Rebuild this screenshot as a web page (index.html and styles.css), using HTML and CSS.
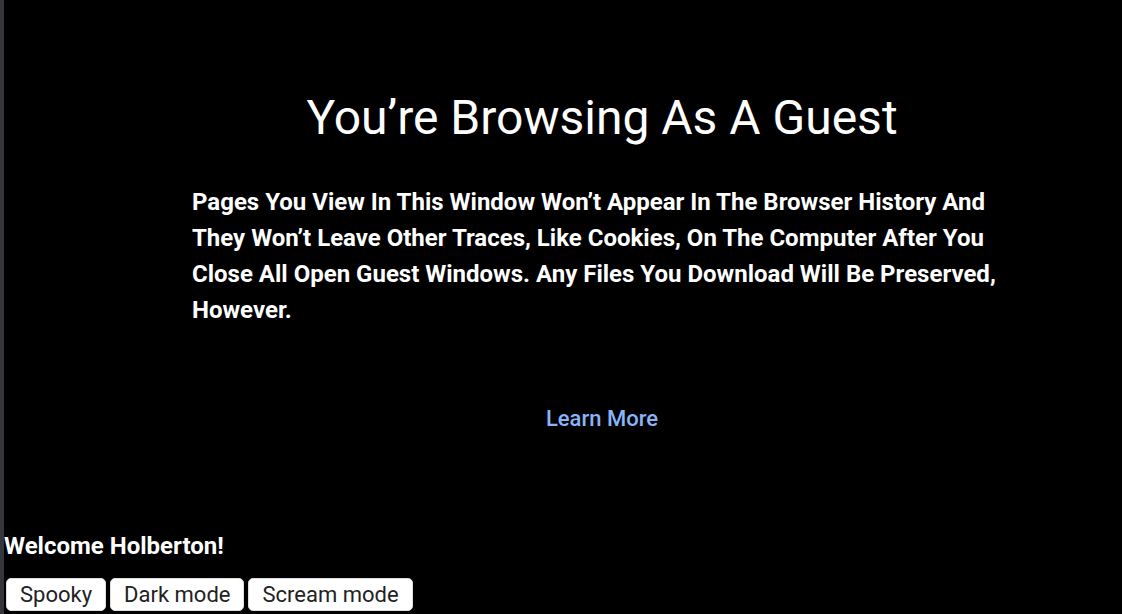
FILE: index.html
```html
<!DOCTYPE html>
<html lang="en">
<head>
<meta charset="utf-8">
<title>Guest</title>
<link rel="stylesheet" href="styles.css">
</head>
<body>
<div class="page">
  <main class="guest">
    <h1 class="title">You’re Browsing As A Guest</h1>
    <p class="desc">Pages You View In This Window Won’t Appear In The Browser History And They Won’t Leave Other Traces, Like Cookies, On The Computer After You Close All Open Guest Windows. Any Files You Download Will Be Preserved, However.</p>
    <a class="learn" href="#">Learn More</a>
  </main>
  <footer class="foot">
    <h2 class="welcome">Welcome Holberton!</h2>
    <div class="buttons">
      <button class="btn">Spooky</button>
      <button class="btn">Dark mode</button>
      <button class="btn">Scream mode</button>
    </div>
  </footer>
</div>
</body>
</html>
```

FILE: styles.css
```css
html, body {
  margin: 0;
  padding: 0;
  height: 100%;
  background: #000;
}
body {
  border-left: 4px solid #35363a;
  box-sizing: border-box;
  font-family: Roboto, "Liberation Sans", sans-serif;
  color: #fff;
  overflow: hidden;
}
.page {
  display: flex;
  flex-direction: column;
  height: 614px;
}
.guest {
  display: flex;
  flex-direction: column;
  align-items: center;
  padding: 89px 110px 0 188px;
}
.title {
  margin: 0;
  font-size: 48px;
  font-weight: 400;
  line-height: 58px;
}
.desc {
  margin: 37px 0 0;
  align-self: stretch;
  font-size: 24px;
  font-weight: 700;
  line-height: 36px;
}
.learn {
  margin-top: 73px;
  font-size: 22px;
  font-weight: 500;
  color: #8ab4f8;
  text-decoration: none;
  line-height: 36px;
}
.foot {
  margin-top: auto;
  padding: 0 0 3px 0;
}
.welcome {
  margin: 0 0 18px 0;
  font-size: 24px;
  font-weight: 700;
  line-height: 28px;
}
.buttons {
  display: flex;
  gap: 4px;
  padding-left: 2px;
}
.btn {
  font-family: Roboto, "Liberation Sans", sans-serif;
  font-size: 22px;
  color: #222;
  background: #fff;
  border: 1px solid #ddd;
  border-radius: 5px;
  padding: 0 13px;
  height: 33px;
}
```
